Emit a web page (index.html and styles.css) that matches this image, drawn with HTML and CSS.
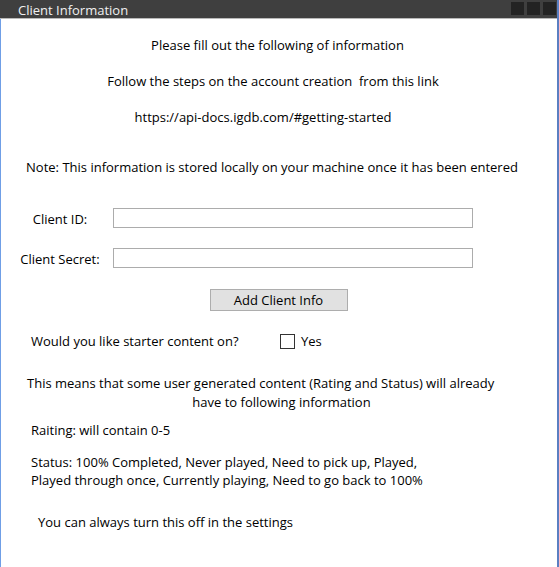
FILE: index.html
```html
<!DOCTYPE html>
<html>
<head>
<meta charset="utf-8">
<title>Client Information</title>
<link rel="stylesheet" href="styles.css">
</head>
<body>
<div class="window">
  <div class="titlebar">
    <span class="title">Client Information</span>
    <div class="controls"><span class="ctl"></span><span class="ctl"></span><span class="ctl"></span></div>
  </div>
  <div class="content">
    <p class="line intro">Please fill out the following of information</p>
    <p class="line steps">Follow the steps on the account creation&nbsp; from this link</p>
    <p class="line link">https://api-docs.igdb.com/#getting-started</p>
    <p class="line note">Note: This information is stored locally on your machine once it has been entered</p>
    <div class="field first">
      <label class="field-label">Client ID:</label>
      <input class="field-input" type="text">
    </div>
    <div class="field second">
      <label class="field-label">Client Secret:</label>
      <input class="field-input" type="text">
    </div>
    <div class="btn-row"><button class="btn">Add Client Info</button></div>
    <div class="check-row">
      <span class="check-label">Would you like starter content on?</span>
      <span class="checkbox"></span>
      <span class="check-text">Yes</span>
    </div>
    <div class="means">
      <div class="means1">This means that some user generated content (Rating and Status) will already</div>
      <div class="means2">have to following information</div>
    </div>
    <p class="line raiting">Raiting: will contain 0-5</p>
    <p class="status">Status: 100% Completed, Never played, Need to pick up, Played,<br>Played through once, Currently playing, Need to go back to 100%</p>
    <p class="line final">You can always turn this off in the settings</p>
  </div>
</div>
</body>
</html>
```
FILE: styles.css
```css
* { box-sizing: border-box; }
html, body { margin: 0; padding: 0; background: #ffffff; }
body {
  font-family: "Open Sans", "Liberation Sans", Arial, sans-serif;
  font-size: 13px;
  color: #000;
}
.window {
  width: 559px;
  height: 567px;
  border-right: 2px solid #5b7fc2;
  display: flex;
  flex-direction: column;
  overflow: hidden;
}
.titlebar {
  height: 19px;
  background: #3f3f3f;
  border-bottom: 1px solid #b9b9b9;
  display: flex;
  align-items: flex-start;
  justify-content: space-between;
  padding-left: 18px;
  padding-right: 1px;
}
.title {
  color: #f0f0f0;
  line-height: 18px;
  padding-top: 1px;
}
.controls {
  display: flex;
  gap: 3px;
  padding-top: 2px;
}
.ctl {
  width: 13px;
  height: 13px;
  background: #232323;
  display: block;
}
.content {
  flex: 1;
  border-left: 1px solid #6f9ee6;
  display: flex;
  flex-direction: column;
}
p { margin: 0; }
.line { line-height: 18px; }
.intro { margin-top: 17px; text-align: center; padding-right: 3px; }
.steps { margin-top: 18px; text-align: center; padding-right: 12px; }
.link { margin-top: 18px; text-align: center; padding-right: 32px; }
.note { margin-top: 32px; text-align: center; padding-right: 14px; }
.field {
  display: flex;
  align-items: flex-start;
  padding-left: 8px;
  gap: 2px;
}
.field.first { margin-top: 32px; }
.field.second { margin-top: 20px; }
.field-label {
  width: 102px;
  text-align: center;
  line-height: 17px;
  padding-top: 3px;
}
.field-input {
  width: 360px;
  height: 20px;
  border: 1px solid #acacac;
  margin: 0;
  padding: 0 3px;
  font: inherit;
  background: #fff;
}
.btn-row {
  margin-top: 21px;
  display: flex;
  justify-content: center;
  padding-right: 1px;
}
.btn {
  width: 138px;
  height: 22px;
  background: #e1e1e1;
  border: 1px solid #adadad;
  font: inherit;
  color: #000;
  padding: 0;
  margin: 0;
  line-height: 20px;
}
.check-row {
  margin-top: 21px;
  display: flex;
  align-items: flex-start;
  padding-left: 30px;
  line-height: 18px;
}
.check-label { width: 249px; }
.checkbox {
  width: 15px;
  height: 15px;
  border: 1px solid #333;
  background: #fff;
  margin-top: 2px;
  display: block;
}
.check-text { margin-left: 6px; }
.means { margin-top: 24px; line-height: 18.5px; }
.means1 { padding-left: 26px; }
.means2 { text-align: center; padding-left: 5px; }
.raiting { margin-top: 10px; padding-left: 30px; }
.status { margin-top: 14px; padding-left: 30px; line-height: 18px; }
.final { margin-top: 24px; padding-left: 37px; }
```
